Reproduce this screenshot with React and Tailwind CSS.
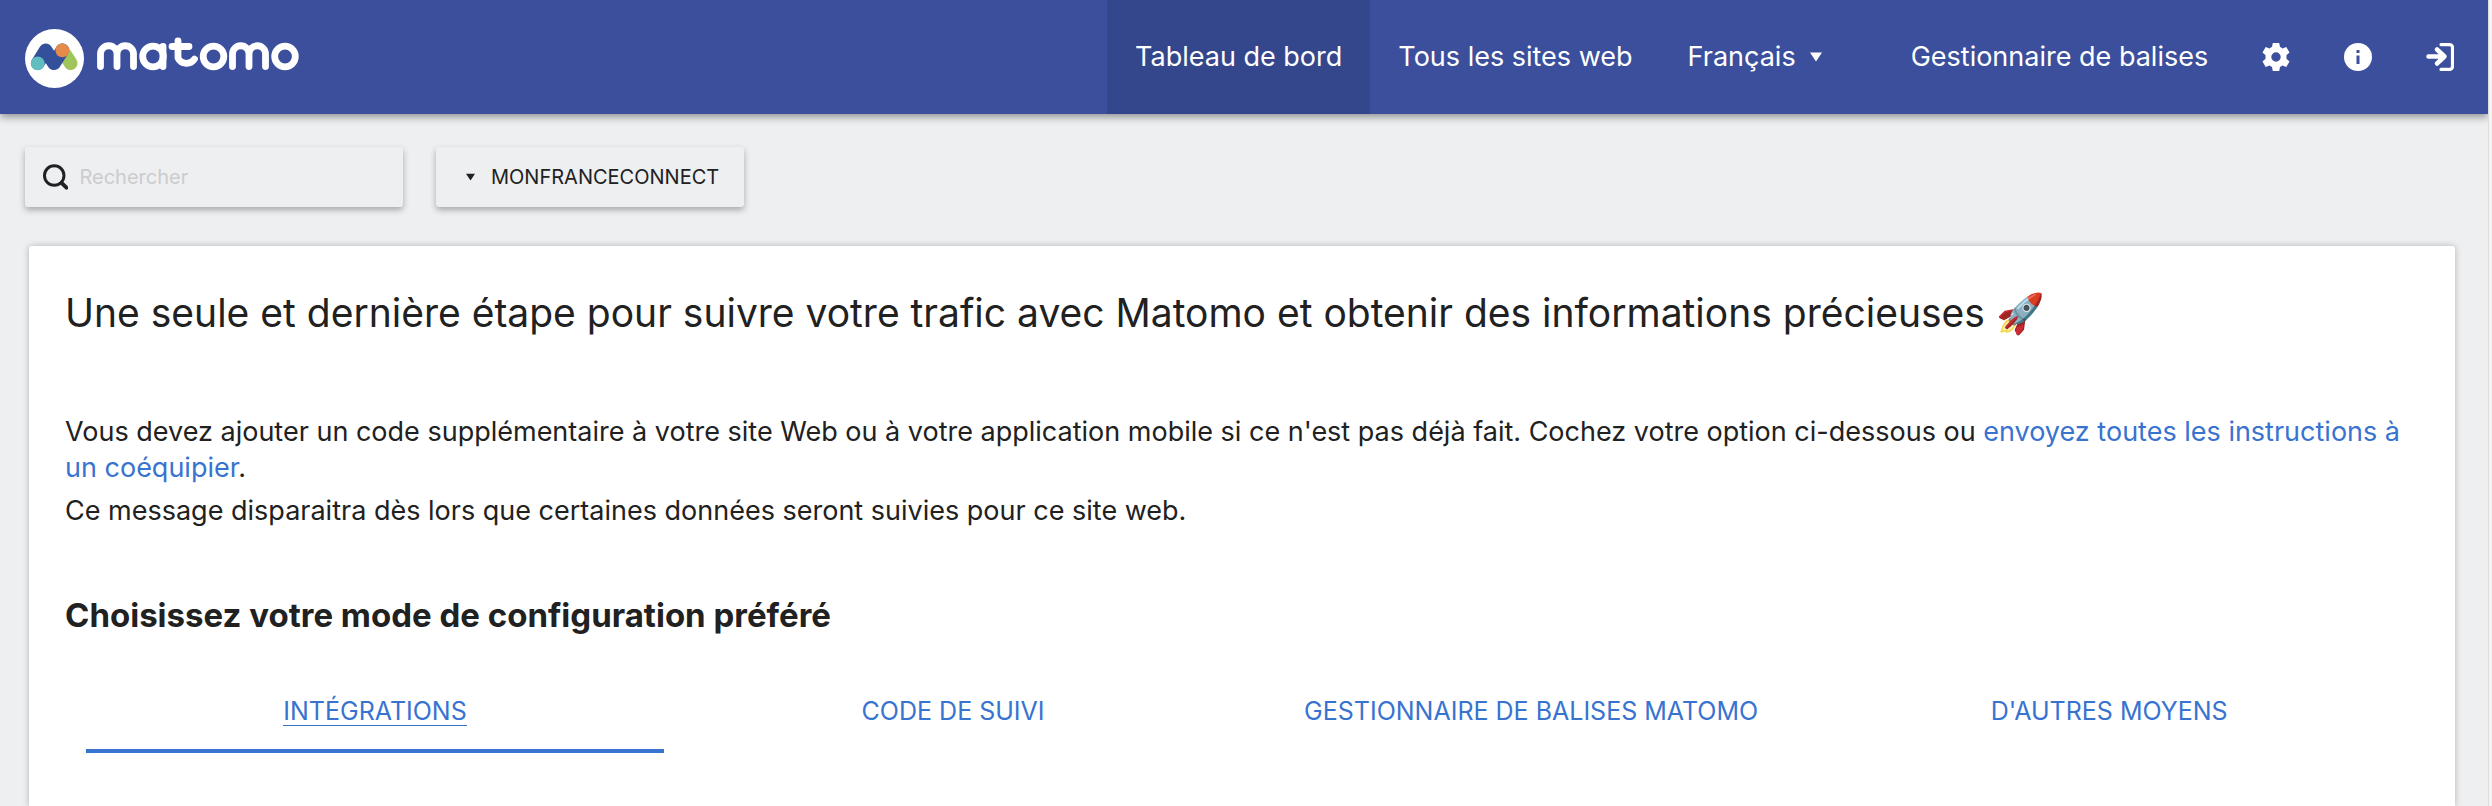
import React from "react";

const font = "font-['Inter','Liberation_Sans',sans-serif]";

function Logo() {
  return (
    <a href="#" aria-label="Matomo" className="block shrink-0">
      <svg width="274" height="62" viewBox="0 -1 274 62" fill="none">
        <circle cx="29.5" cy="31.5" r="29.5" fill="#fff" />
        <g strokeWidth="13.6" strokeLinecap="round" strokeLinejoin="round">
          <path d="M37.300 23.300L45.700 36.300" stroke="#9fc55b" />
          <path d="M12.700 36.300L20.700 23.300L29 36.300L37.300 23.300" stroke="#35509a" />
        </g>
        <circle cx="12.700" cy="36.300" r="6.900" fill="#62bdc0" />
        <circle cx="37.300" cy="23.300" r="6.900" fill="#e58a4a" />
        <g stroke="#fff" strokeWidth="6.800" strokeLinecap="round" strokeLinejoin="round">
          <path d="M75.500 39.500 V27 A8 8 0 0 1 92 27 V39.500 M92 27 A8 8 0 0 1 108.500 27 V39.500" />
          <circle cx="128" cy="29.500" r="10.300" />
          <path d="M138 19.500 V39.500" />
          <path d="M153 14 V31 A9.500 9.500 0 0 0 169.500 32 M147 19.500 H164" />
          <circle cx="188.500" cy="29.500" r="10.300" />
          <path d="M207.500 39.500 V27 A8 8 0 0 1 224 27 V39.500 M224 27 A8 8 0 0 1 240.500 27 V39.500" />
          <circle cx="260" cy="29.500" r="10.300" />
        </g>
      </svg>
    </a>
  );
}

function Caret({ className }) {
  return (
    <svg viewBox="0 0 12 9" className={className} fill="currentColor" aria-hidden="true">
      <path d="M0 0h12L6 9z" />
    </svg>
  );
}

function TopIcon({ label, children }) {
  return (
    <button type="button" aria-label={label} className="grid size-7 place-items-center">
      <svg width="28" height="28" viewBox="0 0 28 28" aria-hidden="true">{children}</svg>
    </button>
  );
}

const tabs = ["Intégrations", "Code de suivi", "Gestionnaire de balises Matomo", "D'autres moyens"];

export default function App() {
  return (
    <div className={`${font} flex min-h-screen bg-[#eeeff1] text-[#212121]`}>
      <div className="flex min-w-0 grow flex-col">
        <header className="flex h-[114px] items-center justify-between bg-[#3b4f9d] pl-[25px] pr-[34px] text-white shadow-[0_3px_8px_rgba(0,0,0,0.4)]">
          <Logo />
          <nav className="flex h-full items-center text-[27px]">
            <a href="#" className="flex h-full items-center bg-[#35478c] px-7">Tableau de bord</a>
            <a href="#" className="px-7">Tous les sites web</a>
            <button type="button" className="flex items-center gap-[14px] px-[27px]">
              Français
              <Caret className="h-3 w-3" />
            </button>
            <a href="#" className="pl-[62px] pr-[54px]">Gestionnaire de balises</a>
            <div className="flex gap-[54px]">
              <TopIcon label="Administration">
                <path fill="#fff" fillRule="evenodd" d="M10.800 0h6.400l.8 4a11 11 0 0 1 2.400 1.400l3.900-1.300 3.200 5.500-3.100 2.700a11 11 0 0 1 0 3.400l3.100 2.700-3.200 5.500-3.900-1.300A11 11 0 0 1 18 24l-.8 4h-6.400l-.8-4a11 11 0 0 1-2.400-1.400l-3.900 1.300-3.200-5.500 3.100-2.700a11 11 0 0 1 0-3.400L.5 9.600l3.200-5.500 3.900 1.300A11 11 0 0 1 10 4zM14 9.300a4.700 4.700 0 1 0 0 9.400a4.700 4.700 0 1 0 0-9.400z" />
              </TopIcon>
              <TopIcon label="Aide">
                <circle cx="14" cy="14" r="14" fill="#fff" />
                <path fill="#3b4f9d" d="M12.500 7h3v3h-3zM12.500 12.500h3v8.500h-3z" />
              </TopIcon>
              <TopIcon label="Déconnexion">
                <path fill="none" stroke="#fff" strokeWidth="4.500" strokeLinecap="round" strokeLinejoin="round" d="M2.500 13.500h14M11 6.500l7.500 7-7.500 7" />
                <path fill="none" stroke="#fff" strokeWidth="3.200" strokeLinecap="round" d="M15 1.600h8.500a3 3 0 0 1 3 3v18.800a3 3 0 0 1-3 3H15" />
              </TopIcon>
            </div>
          </nav>
        </header>

        <main className="flex grow flex-col pl-[29px] pr-[33px]">
          <div className="-ml-1 flex gap-[33px] pt-[33px]">
            <label className="flex h-[60px] w-[378px] items-center gap-2 rounded-[3px] px-[18px] shadow-[0_3px_6px_rgba(0,0,0,0.3)]">
              <svg width="26" height="26" viewBox="0 0 26 26" fill="none" stroke="#212121" aria-hidden="true">
                <circle cx="11.500" cy="11.500" r="10" strokeWidth="3" />
                <path d="M19 19l5 5" strokeWidth="4" strokeLinecap="round" />
              </svg>
              <input type="text" aria-label="Rechercher" placeholder="Rechercher" className="min-w-0 grow bg-transparent pl-[3px] text-[20px] outline-none placeholder:text-[#cbcccd]" />
            </label>
            <button type="button" className="flex h-[60px] items-center gap-4 rounded-[3px] pl-[30px] pr-[25px] text-[20px] uppercase shadow-[0_3px_6px_rgba(0,0,0,0.3)]">
              <Caret className="h-[8px] w-[9px]" />
              MonFranceConnect
            </button>
          </div>

          <section className="mt-[39px] grow rounded-t-[3px] bg-white px-9 pt-10 shadow-[0_0_6px_rgba(0,0,0,0.25)]">
            <h1 className="text-[39px] leading-[54px]">
              Une seule et dernière étape pour suivre votre trafic avec Matomo et obtenir des informations précieuses 🚀
            </h1>
            <div className="mt-[74px] text-[27px] leading-9">
              <p>
                Vous devez ajouter un code supplémentaire à votre site Web ou à votre application mobile si ce n'est pas déjà fait. Cochez votre option ci-dessous ou{" "}
                <a href="#" className="text-[#3873d0]">envoyez toutes les instructions à un coéquipier</a>.
              </p>
              <p className="mt-[7px]">Ce message disparaitra dès lors que certaines données seront suivies pour ce site web.</p>
            </div>
            <h2 className="mt-[66px] text-[33px] leading-10 font-bold">Choisissez votre mode de configuration préféré</h2>
            <div role="tablist" className="mt-[38px] grid grid-cols-4 px-[21px]">
              {tabs.map((tab, i) => (
                <button
                  key={tab}
                  type="button"
                  role="tab"
                  aria-selected={i === 0}
                  className="flex h-20 items-center justify-center border-b-4 border-transparent text-[25px] leading-7 text-[#3873d0] uppercase aria-selected:border-[#3873d0]"
                >
                  <span className={i === 0 ? "border-b border-[#3873d0]" : "border-b border-transparent"}>{tab}</span>
                </button>
              ))}
            </div>
          </section>
        </main>
      </div>
      <div className="w-1 border-l border-[#dedede] bg-[#f4f4f4]" />
    </div>
  );
}
